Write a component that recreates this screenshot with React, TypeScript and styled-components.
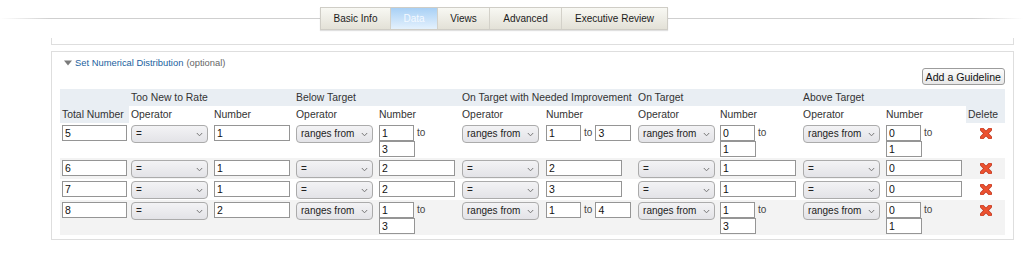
import React from 'react';
import styled, { createGlobalStyle, css } from 'styled-components';

const GlobalStyle = createGlobalStyle`
  html, body { margin: 0; padding: 0; background: #fff; }
  body { font-family: "Liberation Sans", Arial, sans-serif; color: #333; }
`;

const Page = styled.div`
  width: 1023px;
  height: 257px;
  overflow: hidden;
`;

const Header = styled.div`
  box-sizing: border-box;
  height: 30px;
  padding: 7px 0 0 320px;
  background: linear-gradient(to right, rgba(205,205,205,0), #cfcfcf 5%, #cfcfcf 95%, rgba(205,205,205,0)) no-repeat 0 18px / 100% 1px;
`;

const Tabs = styled.div`
  display: flex;
  width: max-content;
  border: 1px solid #cfcdc6;
  box-shadow: 0 1px 1px rgba(0, 0, 0, 0.12);
`;

const Tab = styled.div<{ $w: number; $active?: boolean }>`
  box-sizing: border-box;
  width: ${(p) => p.$w}px;
  height: 21px;
  display: flex;
  align-items: center;
  justify-content: center;
  font-size: 10px;
  color: #1c1c1c;
  background: linear-gradient(#f8f8f3, #e3e1d7);
  border-left: 1px solid #d3d1c9;
  &:first-child { border-left: none; }
  ${(p) =>
    p.$active &&
    css`
      background: linear-gradient(#a8d0f5, #e4f1fd);
      color: #f4f9ff;
    `}
`;

const Content = styled.div`
  padding: 8px 0 0 51px;
`;

const PrevPanel = styled.div`
  box-sizing: border-box;
  width: 963px;
  height: 7px;
  border: 1px solid #dedede;
  border-top: none;
`;

const Panel = styled.div`
  box-sizing: border-box;
  width: 963px;
  margin-top: 6px;
  padding: 5px 8px 4px;
  border: 1px solid #dedede;
`;

const Title = styled.div`
  display: flex;
  align-items: center;
  gap: 3px;
  height: 11px;
  padding-left: 4px;
  font-size: 9.4px;
  color: #666;
`;

const TitleLink = styled.span`
  color: #1b5f9e;
`;

const ButtonRow = styled.div`
  display: flex;
  justify-content: flex-end;
  margin-bottom: 4px;
`;

const Button = styled.button`
  box-sizing: border-box;
  height: 17px;
  padding: 0 3px;
  font-family: "Liberation Sans", Arial, sans-serif;
  font-size: 10.6px;
  color: #111;
  border: 1px solid #9c9c9c;
  border-radius: 3px;
  background: linear-gradient(#fcfcfc, #e7e7e7);
`;

const Table = styled.table`
  width: 945px;
  border-collapse: collapse;
  table-layout: fixed;
`;

const Col = styled.col<{ $w: number }>`
  width: ${(p) => p.$w}px;
`;

const Th = styled.th<{ $shade?: boolean; $h: number; $bottom?: boolean }>`
  height: ${(p) => p.$h}px;
  padding: 0 2px ${(p) => (p.$bottom ? '2px' : '0')};
  text-align: left;
  vertical-align: ${(p) => (p.$bottom ? 'bottom' : 'middle')};
  font-weight: normal;
  font-size: 10.4px;
  line-height: 13px;
  color: #333;
  white-space: nowrap;
  background: ${(p) => (p.$shade ? '#e9eef3' : '#fff')};
`;

const Tr = styled.tr<{ $alt?: boolean }>`
  background: ${(p) => (p.$alt ? '#f3f3f3' : '#fff')};
`;

const Td = styled.td`
  padding: 2px 2px 1px;
  vertical-align: top;
  text-align: left;
  line-height: 0;
`;

const DeleteTd = styled.td`
  padding: 5px 0 0;
  vertical-align: top;
  line-height: 0;
  & > svg { display: block; margin: 0 auto; }
`;

const Input = styled.input<{ $w: number }>`
  display: block;
  box-sizing: border-box;
  width: ${(p) => p.$w}px;
  height: 16px;
  margin: 0;
  padding: 0 2px;
  border: 1px solid #959595;
  border-radius: 0;
  background: #fff;
  font-family: "Liberation Sans", Arial, sans-serif;
  font-size: 10.5px;
  line-height: 14px;
  color: #111;
  outline: none;
`;

const SelectBox = styled.div`
  box-sizing: border-box;
  width: 77px;
  height: 18px;
  display: flex;
  align-items: center;
  justify-content: space-between;
  padding: 0 4px;
  border: 1px solid #ababab;
  border-radius: 4px;
  background: linear-gradient(#f3f3f5, #e3e3e7);
  font-size: 10px;
  line-height: 12px;
  color: #222;
`;

const Range = styled.div`
  display: flex;
  flex-wrap: wrap;
  align-items: center;
  column-gap: 3px;
`;

const To = styled.span`
  font-size: 10px;
  line-height: 16px;
  color: #444;
`;

const Chevron = () => (
  <svg width="7" height="5" viewBox="0 0 7 5">
    <path d="M0.8 1 L3.5 3.8 L6.2 1" fill="none" stroke="#777" strokeWidth="1" />
  </svg>
);

const Triangle = () => (
  <svg width="8" height="6" viewBox="0 0 8 6">
    <path d="M0 0.5 L8 0.5 L4 5.5 Z" fill="#7a7a7a" />
  </svg>
);

const DeleteIcon = () => (
  <svg width="12" height="11" viewBox="0 0 12 11">
    <path d="M2 1.5 L10 9.5 M10 1.5 L2 9.5" stroke="#b8321c" strokeWidth="3.9" strokeLinecap="round" />
    <path d="M2 1.5 L10 9.5 M10 1.5 L2 9.5" stroke="#ec5230" strokeWidth="2.8" strokeLinecap="round" />
  </svg>
);

type Cell = { op: string; value?: string; range?: [string, string] };
type Row = { total: string; cells: Cell[] };

const rows: Row[] = [
  {
    total: '5',
    cells: [
      { op: '=', value: '1' },
      { op: 'ranges from', range: ['1', '3'] },
      { op: 'ranges from', range: ['1', '3'] },
      { op: 'ranges from', range: ['0', '1'] },
      { op: 'ranges from', range: ['0', '1'] },
    ],
  },
  {
    total: '6',
    cells: [
      { op: '=', value: '1' },
      { op: '=', value: '2' },
      { op: '=', value: '2' },
      { op: '=', value: '1' },
      { op: '=', value: '0' },
    ],
  },
  {
    total: '7',
    cells: [
      { op: '=', value: '1' },
      { op: '=', value: '2' },
      { op: '=', value: '3' },
      { op: '=', value: '1' },
      { op: '=', value: '0' },
    ],
  },
  {
    total: '8',
    cells: [
      { op: '=', value: '2' },
      { op: 'ranges from', range: ['1', '3'] },
      { op: 'ranges from', range: ['1', '4'] },
      { op: 'ranges from', range: ['1', '3'] },
      { op: 'ranges from', range: ['0', '1'] },
    ],
  },
];

const groups = ['Too New to Rate', 'Below Target', 'On Target with Needed Improvement', 'On Target', 'Above Target'];
const colWidths = [69, 83, 82, 83, 83, 84, 92, 82, 83, 83, 82, 39];

export default function App() {
  return (
    <Page>
      <GlobalStyle />
      <Header>
        <Tabs>
          <Tab $w={69}>Basic Info</Tab>
          <Tab $w={47} $active>Data</Tab>
          <Tab $w={52}>Views</Tab>
          <Tab $w={72}>Advanced</Tab>
          <Tab $w={106}>Executive Review</Tab>
        </Tabs>
      </Header>
      <Content>
        <PrevPanel />
        <Panel>
          <Title>
            <Triangle />
            <TitleLink>Set Numerical Distribution</TitleLink>
            <span>(optional)</span>
          </Title>
          <ButtonRow>
            <Button type="button">Add a Guideline</Button>
          </ButtonRow>
          <Table>
            <colgroup>
              {colWidths.map((w, i) => (
                <Col key={i} $w={w} />
              ))}
            </colgroup>
            <thead>
              <tr>
                <Th $shade $h={17} $bottom rowSpan={2}>
                  Total Number
                </Th>
                {groups.map((g) => (
                  <Th key={g} $shade $h={17} colSpan={2}>
                    {g}
                  </Th>
                ))}
                <Th $shade $h={17} $bottom rowSpan={2}>
                  Delete
                </Th>
              </tr>
              <tr>
                {groups.map((g) => (
                  <React.Fragment key={g}>
                    <Th $h={17}>Operator</Th>
                    <Th $h={17}>Number</Th>
                  </React.Fragment>
                ))}
              </tr>
            </thead>
            <tbody>
              {rows.map((r, ri) => (
                <Tr key={r.total} $alt={ri % 2 === 1}>
                  <Td>
                    <Input $w={65} defaultValue={r.total} readOnly />
                  </Td>
                  {r.cells.map((c, ci) => (
                    <React.Fragment key={ci}>
                      <Td>
                        <SelectBox>
                          <span>{c.op}</span>
                          <Chevron />
                        </SelectBox>
                      </Td>
                      <Td>
                        {c.range ? (
                          <Range>
                            <Input $w={35} defaultValue={c.range[0]} readOnly />
                            <To>to</To>
                            <Input $w={36} defaultValue={c.range[1]} readOnly />
                          </Range>
                        ) : (
                          <Input $w={76} defaultValue={c.value} readOnly />
                        )}
                      </Td>
                    </React.Fragment>
                  ))}
                  <DeleteTd>
                    <DeleteIcon />
                  </DeleteTd>
                </Tr>
              ))}
            </tbody>
          </Table>
        </Panel>
      </Content>
    </Page>
  );
}
